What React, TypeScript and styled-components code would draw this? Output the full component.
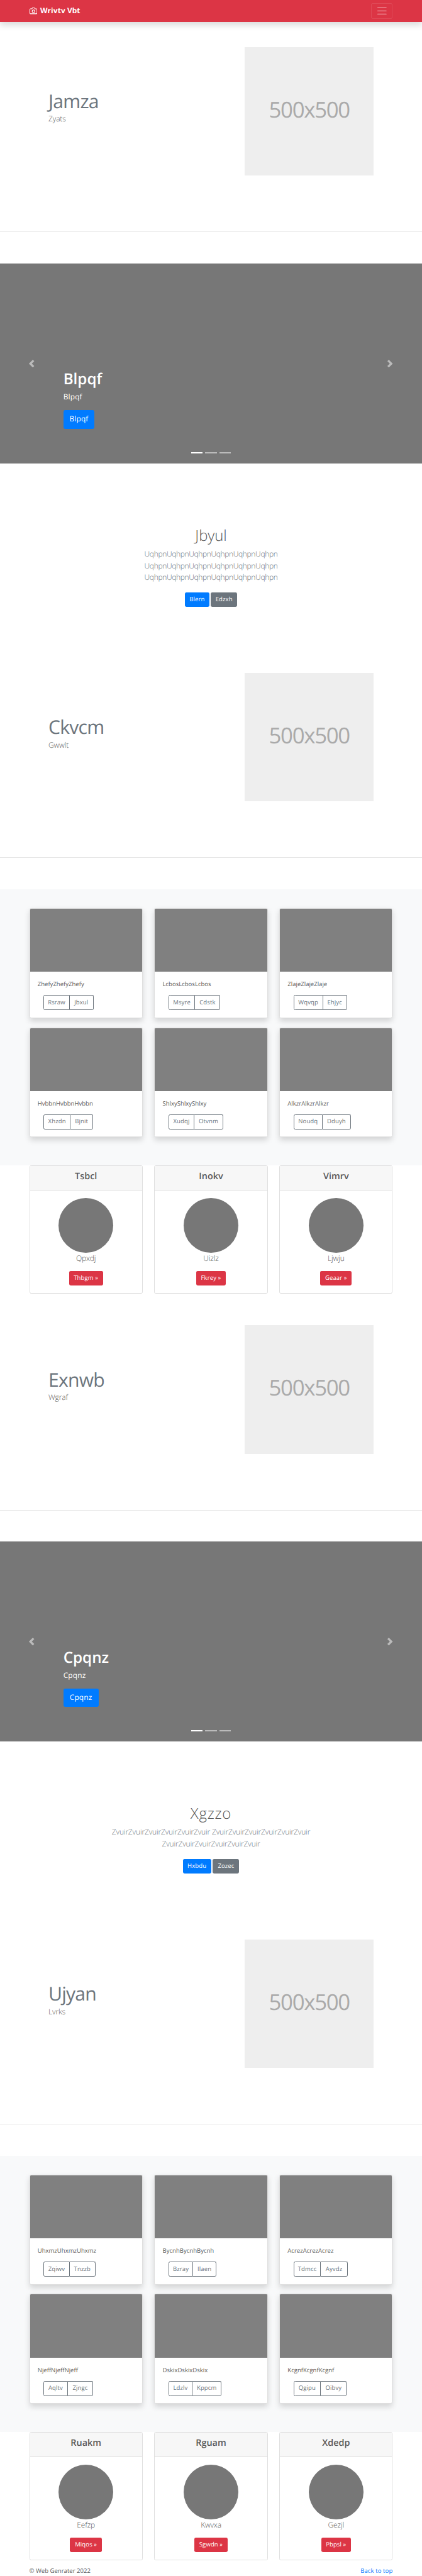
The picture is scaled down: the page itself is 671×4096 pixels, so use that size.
import React from 'react';
import styled, { createGlobalStyle } from 'styled-components';

const u = (n: number) => `${(n * 0.62125).toFixed(3)}px`;

const Global = createGlobalStyle`
  *, *::before, *::after { box-sizing: border-box; }
  html, body { margin: 0; padding: 0; background: #fff; }
  body {
    font-family: "Open Sans", "Noto Sans", sans-serif;
    font-size: ${u(15.4)};
    line-height: ${u(24)};
    color: #5a5a5a;
    text-rendering: geometricPrecision;
    overflow-x: hidden;
  }
  h1, h2, h3, h4, p { margin: 0; }
  a { text-decoration: none; }
`;

const Page = styled.div`
  width: 671px;
  height: 4096px;
  overflow: hidden;
`;

const Navbar = styled.header`
  height: ${u(56)};
  padding: 0 ${u(75)};
  display: flex;
  align-items: center;
  justify-content: space-between;
  background: #dc3545;
  box-shadow: 0 ${u(8)} ${u(16)} rgba(0, 0, 0, 0.15);
`;

const Brand = styled.a`
  display: flex;
  align-items: center;
  gap: ${u(8)};
  color: #fff;
  font-size: ${u(19.2)};
  line-height: ${u(30)};
  font-weight: 700;
  letter-spacing: 0.007em;
  svg { width: ${u(20)}; height: ${u(20)}; display: block; }
`;

const Toggler = styled.button`
  width: ${u(56)};
  height: ${u(40)};
  padding: 0;
  display: flex;
  align-items: center;
  justify-content: center;
  background: transparent;
  border: 1px solid rgba(255, 255, 255, 0.1);
  border-radius: ${u(4)};
  svg { width: ${u(30)}; height: ${u(30)}; }
`;

const Feature = styled.section<{ $top?: number }>`
  padding: ${(p) => u(p.$top ?? 0)} ${u(124)} 0;
  height: ${(p) => u(554 + (p.$top ?? 0))};
  display: flex;
  flex-direction: column;
`;

const FeatureRow = styled.div`
  display: flex;
  justify-content: space-between;
  align-items: flex-start;
`;

const FeatureText = styled.div`
  padding-top: ${u(113.4)};
`;

const FeatureTitle = styled.h2`
  font-size: ${u(48.5)};
  line-height: ${u(50)};
  font-weight: 400;
  letter-spacing: -0.026em;
  color: #6c757d;
  margin-bottom: ${u(7.1)};
`;

const Lead = styled.p<{ $muted?: boolean; $tracking?: number }>`
  font-size: ${u(19.4)};
  line-height: ${u(30)};
  font-weight: 300;
  letter-spacing: ${(p) => p.$tracking ?? -0.015}em;
  color: ${(p) => (p.$muted ? '#6c757d' : '#5a5a5a')};
`;

const Placeholder = styled.div`
  width: ${u(329.3)};
  height: ${u(329.3)};
  padding-bottom: ${u(5)};
  display: flex;
  align-items: center;
  justify-content: center;
  background: #eee;
  color: #aaa;
  font-size: ${u(56)};
  line-height: 1;
  letter-spacing: -0.038em;
`;

const Divider = styled.hr`
  width: ${u(1082)};
  margin: ${u(143.5)} 0 0 -${u(124)};
  border: 0;
  border-top: 1px solid #e6e6e6;
`;

const Carousel = styled.section`
  position: relative;
  height: ${u(512)};
  padding: 0 ${u(162)} ${u(88.5)};
  display: flex;
  flex-direction: column;
  justify-content: flex-end;
  align-items: flex-start;
  background: #777;
  color: #fff;
`;

const SlideTitle = styled.h1`
  font-size: ${u(39)};
  line-height: ${u(48)};
  font-weight: 600;
  margin-bottom: ${u(6)};
`;

const SlideText = styled.p`
  font-size: ${u(19.2)};
  line-height: ${u(30)};
  letter-spacing: 0.015em;
  margin-bottom: ${u(18.3)};
`;

const Control = styled.button<{ $side: 'left' | 'right' }>`
  position: absolute;
  top: 0;
  bottom: 0;
  ${(p) => p.$side}: 0;
  width: ${u(162)};
  padding: 0;
  display: flex;
  align-items: center;
  justify-content: center;
  background: none;
  border: 0;
  opacity: 0.5;
  svg { width: ${u(20)}; height: ${u(20)}; }
`;

const Indicators = styled.div`
  position: absolute;
  left: 0;
  right: 0;
  bottom: ${u(26)};
  display: flex;
  justify-content: center;
  gap: ${u(6)};
`;

const Indicator = styled.span<{ $active?: boolean }>`
  width: ${u(30)};
  height: ${u(3)};
  background: #fff;
  opacity: ${(p) => (p.$active ? 1 : 0.5)};
`;

const Intro = styled.section`
  padding: ${u(161)} 0 ${u(168)};
  display: flex;
  flex-direction: column;
  align-items: center;
  text-align: center;
`;

const IntroTitle = styled.h1<{ $tracking: number }>`
  font-size: ${u(38.6)};
  line-height: ${u(48)};
  font-weight: 300;
  letter-spacing: ${(p) => p.$tracking}em;
  margin-bottom: ${u(8.5)};
`;

const Actions = styled.div`
  margin-top: ${u(22.5)};
  display: flex;
  gap: ${u(4.6)};
`;

const Button = styled.a<{ $w: number; $tone: string; $large?: boolean }>`
  width: ${(p) => u(p.$w)};
  height: ${(p) => u(p.$large ? 48 : 38)};
  display: flex;
  align-items: center;
  justify-content: center;
  white-space: nowrap;
  background: ${(p) => p.$tone};
  border-radius: ${(p) => u(p.$large ? 4.8 : 4)};
  color: #fff;
  font-size: ${(p) => u(p.$large ? 19.2 : 15.4)};
  letter-spacing: 0.01em;
`;

const Album = styled.section`
  padding: ${u(48)} ${u(75)} ${u(72.3)};
  display: grid;
  grid-template-columns: repeat(3, 1fr);
  column-gap: ${u(30)};
  row-gap: ${u(24)};
  background: #f8f9fa;
`;

const Card = styled.article`
  height: ${u(281.6)};
  display: flex;
  flex-direction: column;
  background: #fff;
  border: 1px solid #dfdfdf;
  border-radius: ${u(4)};
  overflow: hidden;
  box-shadow: 0 ${u(8)} ${u(16)} rgba(0, 0, 0, 0.15);
`;

const CardImage = styled.div`
  height: ${u(162)};
  flex: none;
  background: #808080;
`;

const CardBody = styled.div`
  padding: ${u(20)} ${u(19.5)} 0;
`;

const ButtonGroup = styled.div`
  margin: ${u(15.5)} 0 0 ${u(15)};
  display: flex;
`;

const GroupButton = styled.a<{ $w: number }>`
  width: ${(p) => u(p.$w)};
  height: ${u(38)};
  display: flex;
  align-items: center;
  justify-content: center;
  border: 1px solid #6c757d;
  color: #6c757d;
  letter-spacing: 0.01em;
  &:first-child { border-radius: ${u(4)} 0 0 ${u(4)}; }
  &:last-child { border-left: 0; border-radius: 0 ${u(4)} ${u(4)} 0; }
`;

const Profiles = styled.section<{ $after: number }>`
  padding: 0 ${u(75)} ${(p) => u(p.$after)};
  display: grid;
  grid-template-columns: repeat(3, 1fr);
  column-gap: ${u(30)};
`;

const Profile = styled.article`
  height: ${u(328.4)};
  display: flex;
  flex-direction: column;
  align-items: center;
  border: 1px solid #dfdfdf;
  border-radius: ${u(4)};
`;

const ProfileHeader = styled.h4`
  align-self: stretch;
  height: ${u(62)};
  padding-top: ${u(12.5)};
  text-align: center;
  background: #f7f7f7;
  border-bottom: 1px solid #dfdfdf;
  font-size: ${u(23.2)};
  line-height: ${u(28.8)};
  font-weight: 600;
`;

const Avatar = styled.div`
  width: ${u(140)};
  height: ${u(140)};
  margin-top: ${u(20)};
  border-radius: 50%;
  background: #777;
`;

const ProfileAction = styled.div`
  margin-top: ${u(16)};
`;

const Footer = styled.footer`
  padding: 0 ${u(75)};
  display: flex;
  justify-content: space-between;
`;

const TopLink = styled.a`
  color: #007bff;
  letter-spacing: 0.01em;
`;

const BLUE = '#007bff';
const GRAY = '#6c757d';
const RED = '#dc3545';

const Camera = () => (
  <svg viewBox="0 0 24 24" fill="none" stroke="currentColor" strokeWidth="2" strokeLinecap="round" strokeLinejoin="round">
    <path d="M23 19a2 2 0 0 1-2 2H3a2 2 0 0 1-2-2V8a2 2 0 0 1 2-2h4l2-3h6l2 3h4a2 2 0 0 1 2 2z" />
    <circle cx="12" cy="13" r="4" />
  </svg>
);

function FeatureBlock({ title, text, top }: { title: string; text: string; top?: number }) {
  return (
    <Feature $top={top}>
      <FeatureRow>
        <FeatureText>
          <FeatureTitle>{title}</FeatureTitle>
          <Lead>{text}</Lead>
        </FeatureText>
        <Placeholder>500x500</Placeholder>
      </FeatureRow>
      <Divider />
    </Feature>
  );
}

function Slide({ label, width }: { label: string; width: number }) {
  return (
    <Carousel>
      <SlideTitle>{label}</SlideTitle>
      <SlideText>{label}</SlideText>
      <Button $w={width} $tone={BLUE} $large>{label}</Button>
      <Control $side="left" aria-label="Previous">
        <svg viewBox="0 0 8 8" fill="#fff"><path d="M5.25 0l-4 4 4 4 1.5-1.5L4.25 4l2.5-2.5L5.25 0z" /></svg>
      </Control>
      <Control $side="right" aria-label="Next">
        <svg viewBox="0 0 8 8" fill="#fff"><path d="M2.75 0l-1.5 1.5L3.75 4l-2.5 2.5L2.75 8l4-4-4-4z" /></svg>
      </Control>
      <Indicators>
        <Indicator $active />
        <Indicator />
        <Indicator />
      </Indicators>
    </Carousel>
  );
}

type Labelled = [string, number];

interface IntroProps {
  title: string;
  titleTracking: number;
  lines: string[];
  lineTracking: number;
  actions: [Labelled, Labelled];
}

function IntroBlock({ title, titleTracking, lines, lineTracking, actions }: IntroProps) {
  return (
    <Intro>
      <IntroTitle $tracking={titleTracking}>{title}</IntroTitle>
      {lines.map((line, i) => <Lead key={i} $muted $tracking={lineTracking}>{line}</Lead>)}
      <Actions>
        <Button $w={actions[0][1]} $tone={BLUE}>{actions[0][0]}</Button>
        <Button $w={actions[1][1]} $tone={GRAY}>{actions[1][0]}</Button>
      </Actions>
    </Intro>
  );
}

type CardData = [string, Labelled, Labelled];

function AlbumBlock({ cards }: { cards: CardData[] }) {
  return (
    <Album>
      {cards.map(([word, a, b]) => (
        <Card key={word}>
          <CardImage />
          <CardBody>
            <p>{word.repeat(3)}</p>
            <ButtonGroup>
              <GroupButton $w={a[1]}>{a[0]}</GroupButton>
              <GroupButton $w={b[1]}>{b[0]}</GroupButton>
            </ButtonGroup>
          </CardBody>
        </Card>
      ))}
    </Album>
  );
}

type ProfileData = [string, string, Labelled];

function ProfileBlock({ items, after }: { items: ProfileData[]; after: number }) {
  return (
    <Profiles $after={after}>
      {items.map(([title, name, action]) => (
        <Profile key={title}>
          <ProfileHeader>{title}</ProfileHeader>
          <Avatar />
          <Lead>{name}</Lead>
          <ProfileAction>
            <Button $w={action[1]} $tone={RED}>{action[0]} »</Button>
          </ProfileAction>
        </Profile>
      ))}
    </Profiles>
  );
}

const firstCards: CardData[] = [
  ['Zhefy', ['Rsraw', 67.5], ['Jbxul', 60.5]],
  ['Lcbos', ['Msyre', 68.5], ['Cdstk', 64.5]],
  ['Zlaje', ['Wqvqp', 75.5], ['Ehjyc', 61.5]],
  ['Hvbbn', ['Xhzdn', 69.5], ['Bjnit', 58]],
  ['Shlxy', ['Xudqj', 66.5], ['Otvnm', 73.5]],
  ['Alkzr', ['Noudq', 74.5], ['Dduyh', 72.5]],
];

const secondCards: CardData[] = [
  ['Uhxmz', ['Zqiwv', 67.5], ['Tnzzb', 65.5]],
  ['Bycnh', ['Bzray', 63.5], ['Ilaen', 59]],
  ['Acrez', ['Tdmcc', 70.5], ['Ayvdz', 68]],
  ['Njeff', ['Aqltv', 62.5], ['Zjngc', 65]],
  ['Dskix', ['Ldzlv', 61.5], ['Kppcm', 74.5]],
  ['Kcgnf', ['Qgipu', 70], ['Oibvy', 66.5]],
];

export default function App() {
  const uq = 'Uqhpn'.repeat(6);
  const zv = 'Zvuir'.repeat(6);
  return (
    <Page>
      <Global />
      <Navbar>
        <Brand><Camera />Wrivtv Vbt</Brand>
        <Toggler aria-label="Menu">
          <svg viewBox="0 0 30 30" stroke="rgba(255,255,255,0.5)" strokeWidth="2" strokeLinecap="round">
            <path d="M4 7h22M4 15h22M4 23h22" />
          </svg>
        </Toggler>
      </Navbar>
      <FeatureBlock title="Jamza" text="Zyats" top={64} />
      <Slide label="Blpqf" width={80} />
      <IntroBlock
        title="Jbyul"
        titleTracking={-0.004}
        lines={[uq, uq, uq]}
        lineTracking={-0.032}
        actions={[['Blern', 62], ['Edzxh', 67]]}
      />
      <FeatureBlock title="Ckvcm" text="Gwwlt" />
      <AlbumBlock cards={firstCards} />
      <ProfileBlock
        after={80}
        items={[
          ['Tsbcl', 'Qpxdj', ['Thbgm', 87.5]],
          ['Inokv', 'Uizlz', ['Fkrey', 76]],
          ['Vimrv', 'Ljwju', ['Geaar', 80]],
        ]}
      />
      <FeatureBlock title="Exnwb" text="Wgraf" />
      <Slide label="Cpqnz" width={90} />
      <IntroBlock
        title="Xgzzo"
        titleTracking={0.033}
        lines={[`${zv} ${zv}`, zv]}
        lineTracking={-0.016}
        actions={[['Hxbdu', 72.5], ['Zozec', 67.5]]}
      />
      <FeatureBlock title="Ujyan" text="Lvrks" />
      <AlbumBlock cards={secondCards} />
      <ProfileBlock
        after={15.5}
        items={[
          ['Ruakm', 'Eefzp', ['Miqos', 82]],
          ['Rguam', 'Kwvxa', ['Sgwdn', 85.5]],
          ['Xdedp', 'Gezjl', ['Pbpsl', 76.5]],
        ]}
      />
      <Footer>
        <span>© Web Genrater 2022</span>
        <TopLink>Back to top</TopLink>
      </Footer>
    </Page>
  );
}
